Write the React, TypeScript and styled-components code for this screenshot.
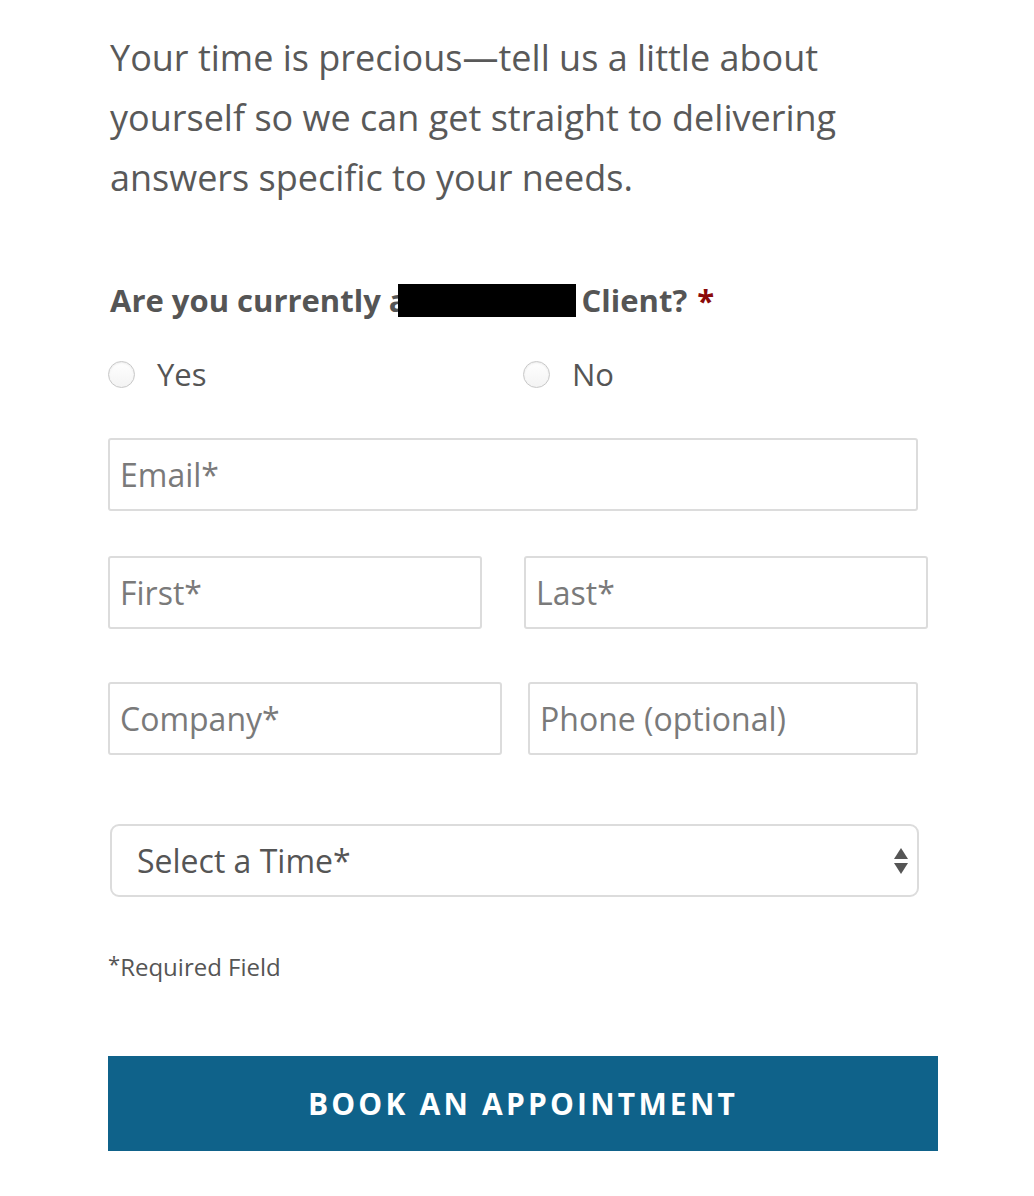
import React from "react";
import styled, { createGlobalStyle } from "styled-components";

const Global = createGlobalStyle`
  html, body { margin: 0; padding: 0; background: #fff; }
  body { font-family: "Open Sans", "Liberation Sans", sans-serif; color: #555; }
  * { box-sizing: border-box; }
`;

const Page = styled.div`
  width: 1034px;
  padding: 28px 0 0 108px;
`;

const Intro = styled.p`
  margin: 0 0 0 2px;
  width: 780px;
  font-size: 36px;
  line-height: 60px;
  color: #595959;
`;

const Question = styled.div`
  margin: 72px 0 0 2px;
  font-size: 31px;
  font-weight: 700;
  line-height: 40px;
  color: #555;
  display: flex;
  align-items: center;
`;

const Redact = styled.span`
  display: inline-block;
  width: 178px;
  height: 33px;
  background: #000;
  margin: 0 6px 0 -10px;
`;

const Req = styled.span`
  color: #8a0a0a;
  margin-left: 10px;
`;

const RadioRow = styled.div`
  display: grid;
  grid-template-columns: 415px 1fr;
  margin-top: 33px;
`;

const RadioLabel = styled.label`
  display: flex;
  align-items: center;
  gap: 22px;
  font-size: 31px;
  color: #555;
`;

const RadioCircle = styled.span`
  width: 27px;
  height: 27px;
  border-radius: 50%;
  border: 1.5px solid #c8c8c8;
  background: linear-gradient(#fff, #f3f3f3);
  box-shadow: inset 0 1px 2px rgba(0,0,0,0.08);
`;

const Fields = styled.div`
  display: flex;
  flex-direction: column;
  margin-top: 43px;
`;

const Row = styled.div<{ $gap: number; $mt: number }>`
  display: flex;
  gap: ${(p) => p.$gap}px;
  margin-top: ${(p) => p.$mt}px;
`;

const Input = styled.div<{ $w: number }>`
  width: ${(p) => p.$w}px;
  height: 73px;
  border: 2px solid #dcdcdc;
  border-radius: 3px;
  padding-left: 10px;
  display: flex;
  align-items: center;
  font-size: 32px;
  color: #7a7a7a;
`;

const Select = styled.div`
  margin: 69px 0 0 2px;
  width: 809px;
  height: 73px;
  border: 2px solid #dcdcdc;
  border-radius: 9px;
  padding: 0 8px 0 25px;
  display: flex;
  align-items: center;
  justify-content: space-between;
  font-size: 32px;
  color: #555;
`;

const Arrows = styled.svg`
  width: 16px;
  height: 30px;
`;

const Note = styled.div`
  margin-top: 54px;
  font-size: 24px;
  line-height: 32px;
  color: #555;
  sup { font-size: 22px; vertical-align: 4px; line-height: 0; }
`;

const Button = styled.button`
  margin-top: 73px;
  width: 830px;
  height: 95px;
  border: none;
  border-radius: 0;
  background: #0f628a;
  box-shadow: 0 2px 0 #c9d9e3;
  color: #fff;
  font-family: "Open Sans", "Liberation Sans", sans-serif;
  font-weight: 700;
  font-size: 30px;
  letter-spacing: 3.2px;
  display: block;
`;

export default function App() {
  return (
    <>
      <Global />
      <Page>
        <Intro>
          Your time is precious—tell us a little about yourself so we can get straight to delivering answers specific to your needs.
        </Intro>
        <Question>
          Are you currently a<Redact />Client?<Req>*</Req>
        </Question>
        <RadioRow>
          <RadioLabel><RadioCircle />Yes</RadioLabel>
          <RadioLabel><RadioCircle />No</RadioLabel>
        </RadioRow>
        <Fields>
          <Row $gap={0} $mt={0}>
            <Input $w={810}>Email*</Input>
          </Row>
          <Row $gap={42} $mt={45}>
            <Input $w={374}>First*</Input>
            <Input $w={404}>Last*</Input>
          </Row>
          <Row $gap={26} $mt={53}>
            <Input $w={394}>Company*</Input>
            <Input $w={390}>Phone (optional)</Input>
          </Row>
        </Fields>
        <Select>
          Select a Time*
          <Arrows viewBox="0 0 16 30">
            <path d="M8 2 L15 13 L1 13 Z" fill="#555" />
            <path d="M1 17 L15 17 L8 28 Z" fill="#555" />
          </Arrows>
        </Select>
        <Note><sup>*</sup>Required Field</Note>
        <Button>BOOK AN APPOINTMENT</Button>
      </Page>
    </>
  );
}
